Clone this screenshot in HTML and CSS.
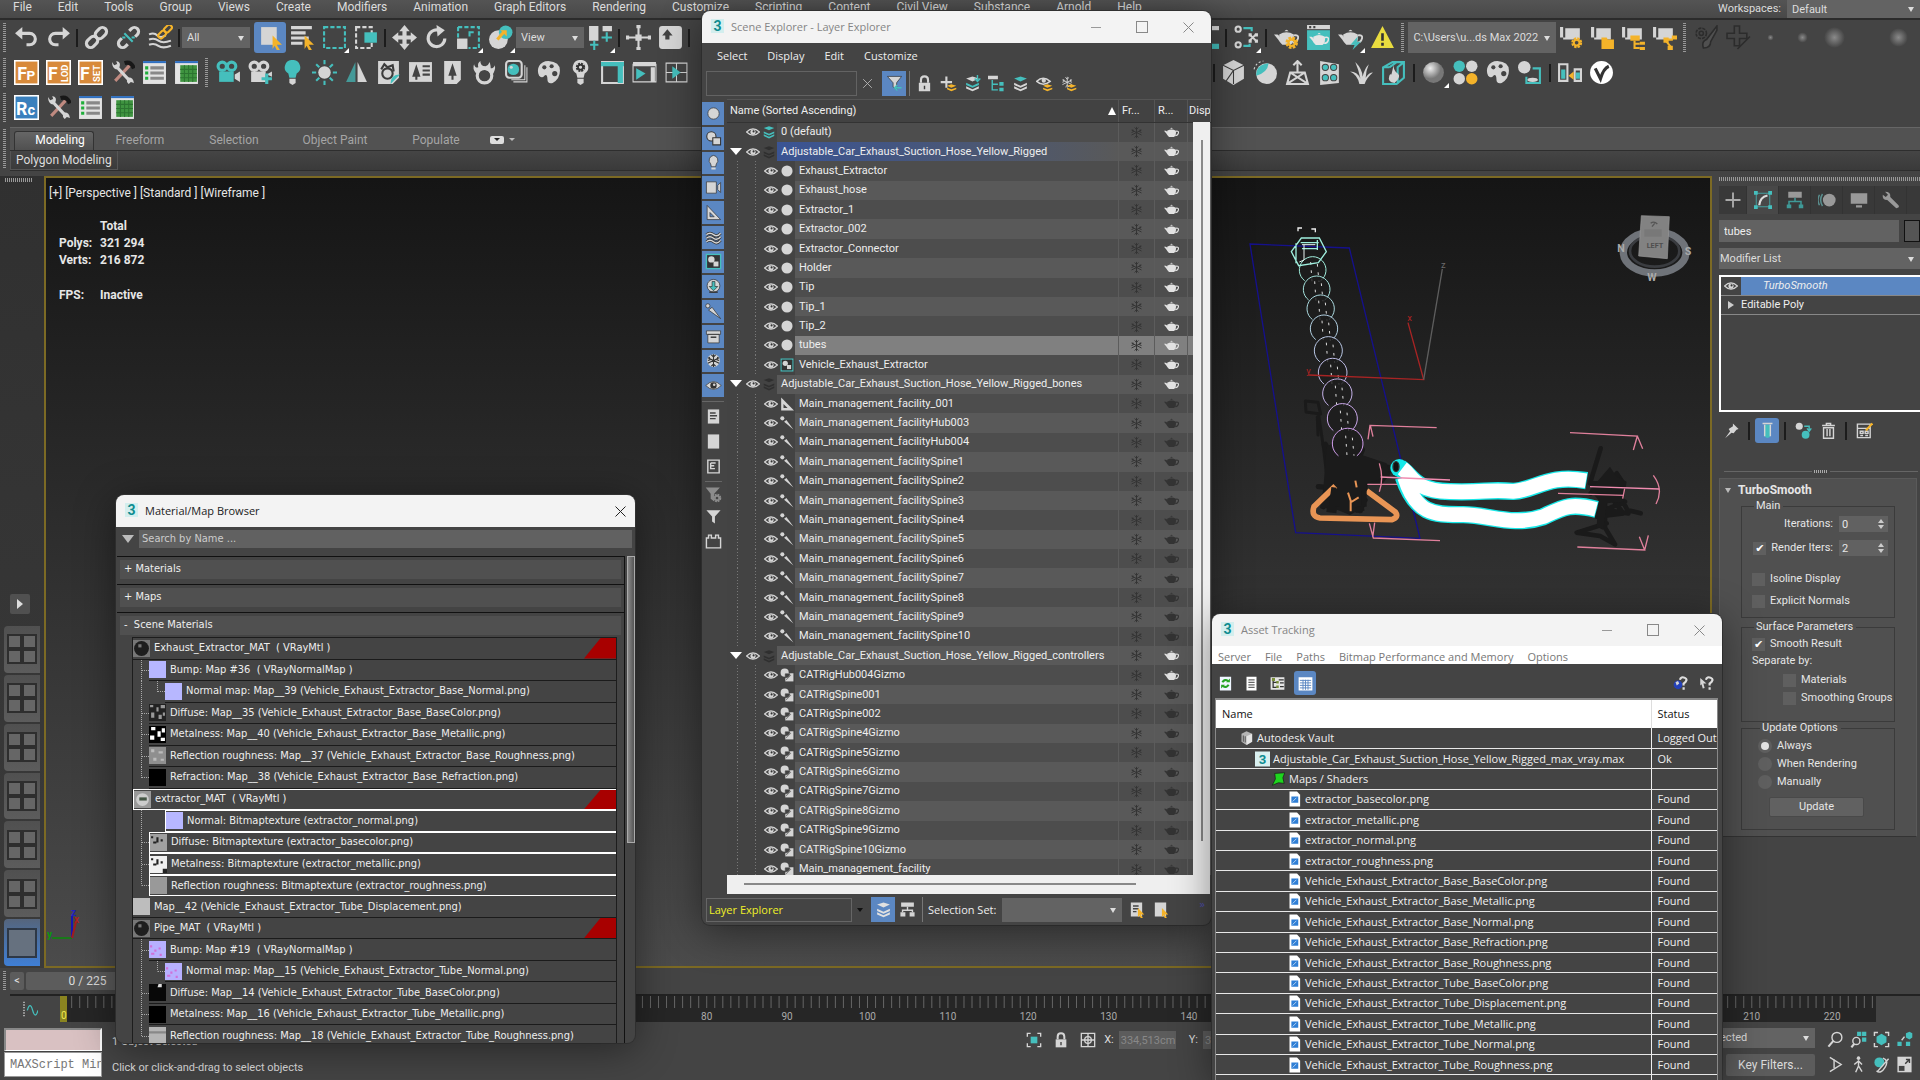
FILE: index.html
```html
<!DOCTYPE html>
<html lang="en">
<head>
<meta charset="utf-8">
<title>3ds Max</title>
<link rel="stylesheet" href="styles.css">
</head>
<body>
<div class="app">
  <header class="menubar">
    <nav class="menus">
      <a href="#">File</a><a href="#">Edit</a><a href="#">Tools</a><a href="#">Group</a><a href="#">Views</a><a href="#">Create</a><a href="#">Modifiers</a><a href="#">Animation</a><a href="#">Graph Editors</a><a href="#">Rendering</a><a href="#">Customize</a><a href="#">Scripting</a><a href="#">Content</a><a href="#">Civil View</a><a href="#">Substance</a><a href="#">Arnold</a><a href="#">Help</a>
    </nav>
    <label class="ws-label" for="workspace">Workspaces:</label>
    <span class="drop ws"><select id="workspace"><option>Default</option></select></span>
  </header>

  <div class="toolbars">
    <div class="toolbar">
      <div class="dock dock-a">
        <i class="grip"></i>
        <div class="tools" data-tools="undo redo | link unlink bind |"></div>
        <span class="drop tb"><select aria-label="Selection filter"><option>All</option></select></span>
        <div class="tools" data-tools="select* byname region^ crossing | move rotate scale^ place^"></div>
        <span class="drop tb view"><select aria-label="Coordinate system"><option>View</option></select></span>
        <div class="tools" data-tools="pivot^ | manip keyboard |"></div>
      </div>
      <div class="dock wide">
        <div class="tools" data-tools="curve | schematic^ | rsetup rframe render^ warning"></div>
        <i class="grip"></i>
        <span class="drop tall"><select aria-label="Project folder"><option>C:\Users\u...ds Max 2022</option></select></span>
        <div class="tools tight" data-tools="docgear docfolder doctree docnode"></div>
        <i class="grip"></i>
        <div class="tools" data-tools="brush plusbrush dot1 dot2 dot3 none dot4"></div>
      </div>
    </div>
    <div class="toolbar">
      <div class="dock dock-b">
        <i class="grip"></i>
        <div class="tools" data-tools="fp flod fset wrench list grid"></div>
        <i class="grip"></i>
        <div class="tools" data-tools="camera cameraplus bulb sun mirror fire billboard tree flame stack palette bulbgear panel play split"></div>
      </div>
      <div class="dock wide">
        <div class="tools" data-tools="| box ballcut tower figures grass gasbox | sphere^ balls palette nodeball | convert vray"></div>
      </div>
    </div>
    <div class="toolbar">
      <i class="grip"></i>
      <div class="tools" data-tools="rc wrench list grid"></div>
    </div>
  </div>

  <div class="ribbon">
    <i class="grip"></i>
    <div class="ribbon-body">
      <nav class="tabs">
        <button class="tab on">Modeling</button><button class="tab">Freeform</button><button class="tab">Selection</button><button class="tab">Object Paint</button><button class="tab">Populate</button>
        <button class="tab-more" aria-label="Ribbon options"><i></i></button>
      </nav>
      <div class="ribbon-panel"><button>Polygon Modeling</button></div>
    </div>
  </div>

  <main class="main">
    <aside class="layouts">
      <i class="grip-h"></i>
      <button class="expand" aria-label="Expand"></button>
      <div class="layout-list" id="layouts"></div>
    </aside>

    <section class="viewport">
      <div class="vp-info">
        <p class="vp-label">[+] [Perspective ] [Standard ] [Wireframe ]</p>
        <dl class="stats">
          <dt></dt><dd>Total</dd>
          <dt>Polys:</dt><dd>321 294</dd>
          <dt>Verts:</dt><dd>216 872</dd>
          <dt class="fps">FPS:</dt><dd class="fps">Inactive</dd>
        </dl>
        <svg class="gizmo" viewBox="0 0 34 34"><path d="M26 30H6" stroke="#0a8a0a" stroke-width="1.5"/><path d="M26 30V8" stroke="#1717b4" stroke-width="2"/><path d="M26 30l4-16" stroke="#a11e1e" stroke-width="2"/><text x="1" y="30" fill="#0a9a0a">y</text><text x="25" y="8" fill="#2222c0">z</text><text x="28" y="15" fill="#b02020">x</text></svg>
      </div>
      <svg class="scene" viewBox="0 0 1500 1140" fill="none" stroke-width="4">
        <path d="M120 132L418 144L630 1015L257 998Z" stroke="#15108c"/>
        <g stroke="#1a1a1a" stroke-width="12" stroke-linecap="round" stroke-linejoin="round">
          <path d="M286 603L324 607L332 642L288 636ZM326 645L340 740L352 840M322 650l2 55" stroke-width="9"/>
          <path d="M345 735l40 100-30 70 100 10M380 770l10 110 60 20M440 760l30 60-20 110M362 780l90 60-80 20M410 700v200M455 750l-40 90M470 795l70 10-30 40-60-10" stroke-width="20"/>
          <path d="M350 850l100-20M340 920l30-60M325 860l60 5M440 930l25-30" stroke-width="16"/>
          <path d="M1172 745L1140 850M1142 880l60-60 20 20-30 60 40-10 20 40 40 10M1140 850l100 0-20-30M1200 870l-40 80 80-10-30-40M1255 940l-70-10 60-25M1190 970l-90 28 70 10 45 25-30-50V880" stroke-width="14"/>
        </g>
        <g fill="#1b1b1b" stroke="none"><path d="M350 740l50-30 40 50 90 30 10 40-70 20-5 70-45 25-50-20-40 0 10-60z"/><path d="M1140 870l60-70 20 30 30 15-10 60-50 5-10 80-20-10 5-80z"/></g>
        <g id="rings" stroke-width="3"></g>
        <path d="M262 84h14M264 84v10M304 87h14M316 87v10" stroke="#eee" stroke-width="4"/>
        <path d="M244 155L274 114H328L349 155L325 188L266 197ZM272 128H326M276 146H324M258 130v60M322 120v30" stroke="#9feedd"/>
        <path d="M282 134V180L268 186M276 134h40" stroke="#e8f5f2" stroke-width="3"/>
        <path d="M296 525L641 539L594 368" stroke="#a82424"/>
        <path d="M641 539L697 207" stroke="#5e5e5e"/>
        <g font-size="28" stroke="none"><text x="289" y="522" fill="#b02222">y</text><text x="592" y="363" fill="#b02222">x</text><text x="693" y="203" fill="#6c6c6c">z</text></g>
        <path d="M376 858L312 920Q302 950 330 954L545 959Q568 952 556 936L470 872" stroke="#e99555" stroke-width="17"/>
        <path d="M414 878l8 24M424 906l22-14M422 900v34M436 842l4 20" stroke="#e99555" stroke-width="6"/>
        <path d="M372 862l-8 60M380 870v50M462 870v50M350 928l30 4M436 930l26-6" stroke="#1a1a1a" stroke-width="16"/>
        <path d="M680 683L480 676L474 718M481 676l8 34M508 790q14 45 0 85M472 853H565M478 970l12 44L690 1022M494 968l-6 44M1080 698L1282 708L1270 750M1282 708l16 38M1044 880L1242 886M1244 866l-6 30M1330 826q32 42 8 86M1102 1041L1304 1050L1288 1010M1304 1050l11-44" stroke="#e0809c"/>
        <g stroke-linejoin="round"><path d="M570 803C610 830 610 872 720 875S830 868 910 874C980 870 1010 822 1130 842" stroke="#16e8e8" stroke-width="52"/><path d="M580 830C620 950 680 943 760 944S910 980 1000 950C1060 922 1080 908 1160 928" stroke="#16e8e8" stroke-width="52"/><circle cx="568" cy="804" r="27" fill="#16e8e8" stroke="none"/><path d="M577 805C612 832 610 872 720 875S830 868 910 874C980 870 1010 822 1128 842" stroke="#fff" stroke-width="44"/><path d="M584 832C620 950 680 943 760 944S910 980 1000 950C1060 922 1080 908 1158 928" stroke="#fff" stroke-width="44"/><ellipse cx="558" cy="800" rx="9" ry="15" fill="#111" stroke="#333"/></g>
        <path d="M512 831L720 840M1140 860L1348 867" stroke="#f08cb0"/>
        <g><ellipse cx="1334" cy="157" rx="94" ry="62" stroke="#6f7379" stroke-width="22"/><ellipse cx="1334" cy="153" rx="74" ry="47" stroke="#3a3c40" stroke-width="8"/><path d="M1294 47L1378 50L1372 176L1286 168Z" fill="#828282" stroke="#999" stroke-width="2"/><path d="M1303 88h52v22h-52z" fill="#787878" stroke="none"/><path d="M1322 70q10-8 20 2M1326 80l8-10" stroke="#555"/><g stroke="none" fill="#4e4e4e" font-weight="700"><text x="1310" y="143" font-size="22">LEFT</text><g fill="#aaa" font-size="32"><text x="1424" y="166">S</text><text x="1312" y="242">W</text><text x="1222" y="156">N</text></g></g></g>
      </svg>
    </section>

    <aside class="command">
      <i class="grip-h"></i>
      <div class="cmd-tabs" id="cmdtabs"></div>
      <div class="cmd-name"><input type="text" aria-label="Object name" value="tubes"><span class="swatch"></span></div>
      <span class="drop modlist"><select aria-label="Modifier List"><option>Modifier List</option></select></span>
      <ul class="modstack">
        <li class="on"><span class="cell" data-icon="eye"></span><em>TurboSmooth</em></li>
        <li><span class="cell"><i class="tri-r"></i></span>Editable Poly</li>
      </ul>
      <div class="stackbar" data-tools="pin | tube* | unique trash | configure"></div>
      <div class="splitter"><i></i></div>
      <section class="rollout">
        <h2><i class="tri-d"></i>TurboSmooth<span class="dots"></span></h2>
        <fieldset class="f-main"><legend>Main</legend>
          <div class="line end"><label for="iter">Iterations:</label><span class="spin"><input id="iter" type="text" value="0"></span></div>
          <div class="line end"><label class="check"><input type="checkbox" checked>Render Iters:</label><span class="spin"><input aria-label="Render Iters" type="text" value="2"></span></div>
          <label class="check iso"><input type="checkbox">Isoline Display</label>
          <label class="check"><input type="checkbox">Explicit Normals</label>
        </fieldset>
        <fieldset class="f-surface"><legend>Surface Parameters</legend>
          <label class="check"><input type="checkbox" checked>Smooth Result</label>
          <p>Separate by:</p>
          <label class="check in"><input type="checkbox">Materials</label>
          <label class="check in"><input type="checkbox">Smoothing Groups</label>
        </fieldset>
        <fieldset class="f-update"><legend>Update Options</legend>
          <label class="check"><input type="radio" name="upd" checked>Always</label>
          <label class="check"><input type="radio" name="upd">When Rendering</label>
          <label class="check"><input type="radio" name="upd">Manually</label>
          <button class="update">Update</button>
        </fieldset>
      </section>
    </aside>
  </main>

  <footer class="bottom">
    <div class="timeslider"><i class="grip"></i><button aria-label="Previous frame">&lt;</button><div class="slider">0 / 225</div></div>
    <div class="trackrow"><span class="curveicon" data-icon="minicurve"></span><svg class="track" id="track"></svg></div>
    <div class="status">
      <div class="maxscript"><div class="pink"></div><input type="text" aria-label="MAXScript Mini Listener" value="MAXScript Mini Listener"></div>
      <div class="messages"><p>1 Object Selected</p><p>Click or click-and-drag to select objects</p></div>
      <div class="coords"><span data-icon="isolate"></span><span data-icon="lock"></span><span data-icon="absolute"></span><label for="cx">X:</label><input id="cx" type="text" value="334,513cm"><label for="cy">Y:</label><input id="cy" type="text" value="3"></div>
      <div class="keys"><span class="drop keydrop"><select aria-label="Key set"><option>Selected</option></select></span><button>Key Filters...</button></div>
      <div class="nav" id="nav"></div>
    </div>
  </footer>

  <section class="window explorer">
    <header class="titlebar dim"><span class="logo">3</span><h1>Scene Explorer - Layer Explorer</h1><button class="w-min" aria-label="Minimize"></button><button class="w-max" aria-label="Maximize"></button><button class="w-close" aria-label="Close" data-icon="x"></button></header>
    <nav class="win-menu"><a href="#">Select</a><a href="#">Display</a><a href="#">Edit</a><a href="#">Customize</a></nav>
    <div class="ex-search"><input type="text" aria-label="Find"><span class="clear" data-icon="x"></span><div class="ex-tools" data-tools="filter* | lock addlayer layerin hierarchy layers eyelayer frost"></div></div>
    <div class="ex-body">
      <div class="ex-side"><div class="ex-on" id="exon"></div><div class="ex-off" id="exoff"></div></div>
      <div class="ex-list">
        <div class="ex-scroll">
          <table class="ex-table"><colgroup><col><col class="c-fr"><col class="c-r"><col class="c-d"></colgroup>
            <thead><tr><th><span class="th-name">Name (Sorted Ascending)<i class="tri-u"></i></span></th><th>Fr...</th><th>R...</th><th class="th-d">Disp</th></tr></thead>
            <tbody id="layers"></tbody>
          </table>
          <div class="vbar"><i></i></div>
        </div>
        <div class="hbar"><i></i></div>
      </div>
    </div>
    <footer class="ex-foot"><input type="text" aria-label="Explorer name" value="Layer Explorer"><i class="tri-s"></i><div class="ex-tools" data-tools="layersw* hier2 |"></div><label for="selset">Selection Set:</label><span class="drop selset"><select id="selset"><option></option></select></span><div class="ex-tools" data-tools="docsel docsel2"></div><span class="more-tools">»</span></footer>
  </section>

  <section class="window materials">
    <header class="titlebar"><span class="logo">3</span><h1>Material/Map Browser</h1><button class="w-close" aria-label="Close" data-icon="x"></button></header>
    <div class="mt-search"><i class="tri-d big"></i><input type="text" aria-label="Search by Name" placeholder="Search by Name ..."></div>
    <div class="mt-body">
      <div class="mt-groups">
        <h2><span>+ Materials</span></h2>
        <h2><span>+ Maps</span></h2>
        <h2 class="open"><span>- &nbsp;Scene Materials</span></h2>
        <ul class="mt-list" id="mats"></ul>
      </div>
      <div class="mt-bar"><i></i></div>
    </div>
  </section>

  <section class="window assets">
    <header class="titlebar dim"><span class="logo">3</span><h1>Asset Tracking</h1><button class="w-min" aria-label="Minimize"></button><button class="w-max" aria-label="Maximize"></button><button class="w-close" aria-label="Close" data-icon="x"></button></header>
    <nav class="win-menu light"><a href="#">Server</a><a href="#">File</a><a href="#">Paths</a><a href="#">Bitmap Performance and Memory</a><a href="#">Options</a></nav>
    <div class="at-tools"><span data-icon="refresh"></span><span data-icon="page"></span><span data-icon="treeview"></span><span class="on" data-icon="table"></span><b></b><span data-icon="help"></span><span data-icon="helpcursor"></span></div>
    <div class="at-frame"><table class="at-table"><colgroup><col><col class="c-s"></colgroup><thead><tr><th>Name</th><th>Status</th></tr></thead><tbody id="assets"></tbody></table></div>
  </section>
</div>
<script src="script.js"></script>
</body>
</html>
```
FILE: styles.css
```css
* { box-sizing: border-box; }
:root { --ui: Roboto, "Liberation Sans", sans-serif; --win: "Open Sans", "Noto Sans", sans-serif; --bg: #444; --fg: #dcdcdc; --blue: #5b87c2; --teal: #45bfbd; --gold: #f4b32a; }
body { margin: 0; background: var(--bg); color: var(--fg); font: 11px/14px var(--ui); overflow: hidden; }
a { color: inherit; text-decoration: none; }
button, input, select { font: inherit; color: inherit; border: 0; margin: 0; padding: 0; background: none; outline: 0; border-radius: 0; }
h1, h2, p, ul, dl, dd, fieldset { margin: 0; padding: 0; border: 0; font: inherit; list-style: none; }
svg { display: block; }
table { border-collapse: collapse; table-layout: fixed; width: 100%; }
th, td { padding: 0; font-weight: 400; text-align: left; }

.w { fill: #d5d5d5; } .t { fill: var(--teal); } .y { fill: var(--gold); } .k { fill: #444; } .d { fill: #8c8c8c; }
.sw { stroke: #d5d5d5; fill: none; stroke-width: 2; } .st { stroke: var(--teal); fill: none; stroke-width: 2; } .sy { stroke: var(--gold); fill: none; stroke-width: 2; } .sk { stroke: #3c3c3c; fill: none; stroke-width: 2; }
.thin { stroke-width: 1; } .fat { stroke-width: 3; }

.app { position: relative; min-height: 100vh; display: flex; flex-direction: column; overflow: hidden; }

.menubar { display: flex; height: 20px; align-items: flex-start; background: linear-gradient(#545454, #484848); border-bottom: 2px solid #2b2b2b; font-size: 12px; line-height: 15px; }
.menus { display: flex; flex: 1; padding-left: 13px; gap: 26px; }
.ws-label { margin-right: 6px; font-size: 11px; line-height: 17px; }
.drop { display: inline-flex; position: relative; background: #636363; color: #ddd; }
.drop select { appearance: none; flex: 1; width: 100%; padding-left: 5px; }
.drop::after { content: ""; position: absolute; right: 6px; top: 50%; margin-top: -2px; border: 3px solid transparent; border-top: 5px solid #ddd; border-bottom: 0; pointer-events: none; }
.ws { width: 133px; height: 18px; font-size: 11px; }

.toolbars { height: 107px; display: flex; flex-direction: column; }
.toolbar { display: flex; height: 35px; align-items: center; }
.dock { display: flex; align-items: center; flex: 0 0 auto; }
.dock-a { width: 62%; } .dock-b { width: 63%; }
.tools { display: flex; align-items: center; }
.grip { flex: 0 0 10px; height: 29px; background: repeating-linear-gradient(#999 0 1px, transparent 1px 2px) 3px 0 / 3px 100% no-repeat; }
.tool { flex: 0 0 32px; width: 32px; height: 31px; display: grid; place-items: center; position: relative; }
.tool svg { width: 25px; height: 25px; }
.tight .tool { flex-basis: 31px; width: 31px; }
.tool.on { background: var(--blue); border-radius: 3px; }
.tool.more::after { content: ""; position: absolute; right: 1px; bottom: 0; border-left: 5px solid transparent; border-bottom: 5px solid #fff; }
.sep { flex: 0 0 6px; height: 18px; background: linear-gradient(#1c1c1c, #1c1c1c) center / 2px 100% no-repeat; }
.wide .sep { flex-basis: 8px; }
.tb { width: 68px; height: 21px; margin-right: 4px; }
.tb.view { margin-right: 0; }
.tall { width: 148px; height: 31px; }

.ribbon { display: flex; height: 44px; }
.ribbon > .grip { height: 40px; margin-top: 2px; }
.ribbon-body { flex: 1; }
.tabs { display: flex; height: 23px; background: #525252; border-top: 1px solid #666; padding: 3px 0 0 4px; }
.tab { height: 17px; font-size: 12px; color: #a5a5a5; width: 92px; }
.tab:nth-child(n+3) { width: 96px; }
.tab:nth-child(4) { width: 106px; }
.tab.on { width: 80px; height: 19px; padding: 0 0 2px 12px; background: linear-gradient(#666, #505050); border: 1px solid #333; border-bottom: 0; border-radius: 3px 3px 0 0; color: #fff; }
.tab-more { display: flex; align-items: center; margin-left: 6px; gap: 5px; height: 17px; }
.tab-more i { width: 14px; height: 8px; background: #ddd; border-radius: 2px; display: grid; place-items: center; }
.tab-more i::after { content: ""; border: 3px solid transparent; border-top-color: #222; border-bottom: 0; }
.tab-more::after { content: ""; border: 3px solid transparent; border-top-color: #bbb; border-bottom: 0; }
.ribbon-panel { height: 21px; border-top: 1px solid #2e2e2e; border-bottom: 1px solid #2e2e2e; background: linear-gradient(#454545, #3a3a3a); }
.ribbon-panel button { display: block; height: 19px; padding: 0 5px 1px; border: 1px solid #555; border-top: 0; font-size: 12px; }

.main { flex: 1; display: flex; min-height: 0; padding-top: 5px; }
.layouts { flex: 0 0 44px; background: linear-gradient(#303030, #3a3a3a); display: flex; flex-direction: column; }
.grip-h { display: block; height: 4px; margin: 2px 0 0 5px; background: repeating-linear-gradient(90deg, #999 0 1px, transparent 1px 2px); }
.layouts .grip-h { margin-right: 12px; }
.expand { width: 20px; height: 20px; margin: auto 0 12px 10px; background: #505050; border-radius: 2px; display: grid; place-items: center; }
.expand::after { content: ""; border: 5px solid transparent; border-left: 6px solid #ddd; border-right: 0; }
.layout-list { height: 340px; margin: 0 4px 2px; display: grid; grid-auto-rows: 1fr; gap: 2px; }
.layout-list button { background: linear-gradient(#505050, #5c5c5c); border-radius: 4px 0 0 4px; display: grid; place-items: center; }
.layout-list button:last-child { background: linear-gradient(#55657c, #3f7fd6); }
.layout-list svg { width: 32px; height: 32px; }
.viewport { flex: 1; display: flex; border: 2px solid #7c6a24; background: linear-gradient(#151515, #4b4b4b); min-width: 0; }
.vp-info { flex: 1; display: flex; flex-direction: column; color: #e6e6e6; }
.vp-label { padding: 8px 0 0 3px; font-size: 12px; }
.stats { display: grid; grid-template-columns: 41px auto; justify-content: start; margin: 18px 0 0 13px; line-height: 17px; font-size: 12px; font-weight: 700; }
.stats .fps { margin-top: 18px; }
.gizmo { width: 34px; height: 34px; margin: auto 0 24px 0; overflow: visible; font: 700 10px var(--ui); }
.scene { flex: 0 0 500px; width: 500px; height: 380px; margin-top: 22px; font-family: var(--ui); }

.command { flex: 0 0 208px; padding-left: 7px; background: #444; overflow: hidden; }
.command .grip-h { margin: 1px 0 0; }
.cmd-tabs { display: flex; height: 28px; margin-top: 5px; background: #393939; }
.cmd-tabs span { flex: 0 0 32px; display: grid; place-items: center; border-right: 1px solid #333; }
.cmd-tabs span:first-child { flex-basis: 28px; }
.cmd-tabs span.on { background: #484848; }
.cmd-tabs svg { width: 18px; height: 18px; }
.cmd-name { display: flex; gap: 5px; margin-top: 6px; }
.cmd-name input { flex: 0 0 180px; width: 180px; height: 22px; background: #626262; padding-left: 5px; color: #eee; }
.swatch { flex: 1; border: 1px solid #111; background: #555; }
.modlist { display: flex; height: 21px; margin-top: 6px; }
.modlist select { padding-left: 1px; }
.modstack { margin: 6px 0 0; height: 137px; border: 2px solid #fff; border-right: 0; }
.modstack li { display: flex; height: 19px; align-items: center; border-bottom: 1px solid #888; color: #eee; }
.modstack li.on { background: var(--blue); }
.modstack .cell { flex: 0 0 20px; height: 18px; display: grid; place-items: center; background: #444; }
.modstack svg { width: 14px; height: 14px; }
.modstack em { padding-left: 22px; }
.tri-r { border: 4px solid transparent; border-left: 6px solid #ccc; border-right: 0; }
.tri-d { border: 3px solid transparent; border-top: 5px solid #bbb; border-bottom: 0; }
.tri-d.big { border-width: 6px; border-top-width: 8px; border-bottom: 0; }
.tri-u { border: 4px solid transparent; border-bottom: 8px solid #fff; border-top: 0; }
.tri-s { border: 3px solid transparent; border-top: 4px solid #111; border-bottom: 0; }
.stackbar { display: flex; align-items: center; margin-top: 6px; gap: 1px; }
.stackbar .tool { flex-basis: 24px; width: 24px; height: 25px; }
.stackbar .tool svg { width: 17px; height: 17px; }
.stackbar .sep { flex-basis: 10px; }
.splitter { margin: 24px 2px 0 5px; height: 8px; background: linear-gradient(#666, #666) 0 50% / 100% 1px no-repeat; display: grid; place-items: center; }
.splitter i { width: 18px; height: 5px; background: repeating-linear-gradient(90deg, #aaa 0 1px, #444 1px 2px); border: 2px solid #444; border-width: 1px 2px; }
.rollout { margin-top: 3px; width: 198px; height: 359px; background: #505050; border: 1px solid #5a5a5a; border-bottom-color: #333; padding-left: 21px; color: #e6e6e6; }
.rollout h2 { display: flex; align-items: center; height: 22px; margin-left: -16px; gap: 7px; font-weight: 700; font-size: 12px; }
.rollout .dots { width: 6px; height: 6px; margin: 0 6px 0 auto; background: radial-gradient(#999 0 40%, transparent 50%) 0 0 / 2px 2px; }
.rollout fieldset { width: 154px; display: flex; flex-direction: column; border: 1px solid #3b3b3b; }
legend { margin-left: 2px; padding: 0 3px 0 2px; height: 12px; line-height: 12px; }
.f-main { height: 118px; margin-top: -1px; }
.rollout .f-main { padding: 4px 6px 0 10px; }
.rollout .f-surface { height: 101px; padding: 2px 0 0 10px; margin-top: 3px; }
.rollout .f-update { height: 108px; padding: 3px 6px 0 16px; }
.line { display: flex; justify-content: flex-end; align-items: center; gap: 6px; height: 16px; margin-bottom: 8px; }
.spin { position: relative; width: 49px; height: 16px; background: #616161; }
.spin input { display: block; width: 40px; height: 16px; padding-left: 3px; }
.spin::before, .spin::after { content: ""; position: absolute; right: 4px; border: 3px solid transparent; }
.spin::before { top: 3px; border-bottom: 4px solid #ccc; border-top: 0; }
.spin::after { bottom: 3px; border-top: 4px solid #ccc; border-bottom: 0; }
.check { display: flex; align-items: center; gap: 5px; height: 16px; flex: 0 0 auto; white-space: nowrap; }
.f-main > .check { margin-bottom: 6px; }
.f-main > .iso { margin-top: 7px; }
.f-surface .check { height: 18px; }
.f-surface p { height: 18px; line-height: 16px; }
.f-update .check { height: 18px; }
.check.in { margin-left: 31px; }
.check input { appearance: none; width: 13px; height: 13px; background: #5f5f5f; display: grid; place-items: center; }
.check input[type=radio] { width: 14px; height: 14px; border-radius: 50%; }
.check input[type=checkbox]:checked::after { content: "✔"; font: 11px/11px "DejaVu Sans", sans-serif; color: #fff; }
.check input[type=radio]:checked::after { content: ""; width: 8px; height: 8px; border-radius: 50%; background: #e4e4e4; }
.update { width: 95px; height: 20px; margin: 6px 0 0 11px; background: #616161; border: 1px solid #494949; border-radius: 2px; }

.bottom { flex: 0 0 112px; background: #444; }
.timeslider { display: flex; height: 26px; align-items: center; gap: 2px; }
.timeslider .grip { flex-basis: 8px; height: 20px; }
.timeslider button { width: 14px; height: 18px; background: #5c5c5c; border-radius: 2px; }
.slider { width: 123px; height: 18px; line-height: 18px; border-radius: 2px; background: #5c5c5c; text-align: center; font-size: 12px; }
.trackrow { display: flex; height: 28px; border-top: 2px solid #222; margin-left: 10px; padding-right: 44px; }
.curveicon { flex: 0 0 50px; display: grid; place-items: center; padding-right: 10px; }
.curveicon svg { width: 16px; height: 16px; }
.track { flex: 1; height: 26px; background: #262626; min-width: 0; font: 10px var(--ui); }
.status { display: flex; height: 58px; padding-top: 6px; }
.maxscript { width: 98px; margin-left: 4px; height: 50px; }
.pink { height: 23px; background: #d9c1c2; border: 2px solid #888; border-right-color: #fff; border-bottom: 1px solid #fff; }
.maxscript input { display: block; width: 98px; height: 25px; margin-top: 1px; background: #fff; border: 1px solid #999; color: #777; font: 12px "Liberation Mono", monospace; padding-left: 5px; }
.messages { margin-left: 10px; flex: 1; padding-top: 7px; }
.messages p + p { margin-top: 12px; }
.coords { display: flex; gap: 5px; height: 24px; align-items: center; margin-right: 473px; }
.coords span { width: 22px; display: grid; place-items: center; }
.coords svg { width: 16px; height: 16px; }
.coords input { width: 57px; height: 18px; background: #5c5c5c; color: #888; padding-left: 2px; margin-right: 8px; }
.coords input + label + input { width: 24px; margin: 0; }
.keys { display: flex; flex-direction: column; gap: 6px; align-items: flex-end; }
.keydrop { width: 115px; height: 20px; }
.keys button { width: 89px; height: 22px; background: #5c5c5c; border-radius: 2px; font-size: 12px; }
.nav { display: grid; grid-template-columns: repeat(4, 23px); grid-auto-rows: 25px; margin: -1px 4px 0 9px; place-items: center; }
.nav svg { width: 17px; height: 17px; }

.window { position: absolute; display: flex; flex-direction: column; width: 510px; background: #444; border-radius: 8px; overflow: hidden; box-shadow: 0 6px 40px rgba(0, 0, 0, .45), 0 0 0 1px #3a3a3a; font-family: var(--win); }
.titlebar { display: flex; align-items: center; flex: 0 0 32px; background: #f3f3f3; color: #222; font-size: 11px; }
.titlebar h1 { flex: 1; }
.titlebar.dim { color: #858585; }
.logo { width: 13px; height: 14px; margin: 0 7px 3px 9px; background: #d3eeee; color: #0e8c90; font: 700 14px/14px var(--ui); text-align: center; }
.titlebar button { width: 46px; height: 32px; display: grid; place-items: center; }
.w-min::after { content: ""; width: 10px; height: 1px; background: #999; }
.w-max::after { content: ""; width: 10px; height: 10px; border: 1px solid #888; }
.titlebar svg { width: 15px; height: 15px; color: #888; }
.win-menu { display: flex; color: #eee; gap: 20px; padding: 6px 0 0 15px; height: 28px; }
.win-menu.light { background: #fff; color: #777; height: 22px; padding: 4px 0 0 6px; gap: 14px; }

.explorer { left: 702px; top: 11px; width: 509px; height: 914px; }
.ex-search { display: flex; align-items: center; height: 25px; padding-left: 4px; }
.ex-search input { width: 151px; height: 25px; border: 1px solid #636363; }
.clear { width: 25px; display: grid; place-items: center; color: #bbb; padding-right: 4px; }
.clear svg { width: 13px; height: 13px; }
.ex-tools { display: flex; align-items: center; }
.ex-tools .tool { flex: 0 0 24px; width: 24px; height: 25px; border-radius: 0; }
.ex-tools .tool svg { width: 17px; height: 17px; }
.ex-tools .sep { background-image: linear-gradient(#777, #777); background-size: 1px 100%; height: 25px; }
.ex-body { display: flex; flex: 1; margin-top: 3px; font-family: var(--ui); min-height: 0; }
.ex-side { flex: 0 0 24px; }
.ex-on { height: 295px; margin-top: 3px; display: grid; grid-auto-rows: 1fr; gap: 2px; }
.ex-on span { background: var(--blue); width: 22px; display: grid; place-items: center; }
.ex-side svg { width: 17px; height: 17px; }
.ex-off { width: 22px; border-top: 1px solid #666; margin-top: 4px; padding-top: 2px; display: grid; grid-auto-rows: 25px; place-items: center; }
.ex-off span:nth-child(4) { border-top: 1px solid #666; padding-top: 4px; }
.ex-list { flex: 1; margin-left: 1px; display: flex; flex-direction: column; min-width: 0; }
.ex-scroll { position: relative; height: 777px; overflow: hidden; }
.ex-table { height: 780px; }
.ex-table th { height: 23px; border: 1px solid #555; border-bottom-color: #333; border-left: 0; padding-left: 3px; color: #eee; white-space: nowrap; overflow: hidden; background: #424242; }
.ex-table .th-d { padding-left: 1px; }
.th-name { display: flex; justify-content: space-between; padding-right: 2px; align-items: center; }
.c-fr { width: 36px; } .c-r { width: 33px; } .c-d { width: 23px; }
.ex-table td { height: 19px; border-right: 1px solid #5c5c5c; background: #4d4d4d; color: #eee; }
.ex-table td:first-child { background: #434343; }
.ex-table tr:nth-child(even) td:not(:first-child), .ex-table tr:nth-child(even) .nm { background: #595959; }
.row { display: flex; height: 100%; align-items: center; }
.row .lead { flex: 0 0 18px; display: grid; place-items: center; align-self: stretch; }
.row.child .lead { flex-basis: 36px; background: repeating-linear-gradient(#777 0 1px, transparent 1px 3px) 10px 0 / 1px 100% no-repeat, repeating-linear-gradient(#777 0 1px, transparent 1px 3px) 28px 0 / 1px 100% no-repeat; }
.row .ic { flex: 0 0 16px; display: grid; place-items: center; }
.row svg { width: 14px; height: 14px; }
.row .lead svg { width: 12px; height: 12px; }
.nm { flex: 1; height: 100%; padding-left: 4px; background: #4d4d4d; display: flex; align-items: center; white-space: nowrap; }
.ex-table tr.current .nm { background: linear-gradient(90deg, #3a5494, #50586a 75%, #595959); }
.ex-table tr.selected td:not(:first-child), .ex-table tr.selected .nm { background: #808080; }
.ex-table td > svg { margin: 0 auto; width: 15px; height: 15px; }
.vbar { position: absolute; right: 1px; top: 23px; bottom: 0; width: 17px; background: #efefef; }
.vbar i { position: absolute; left: 8px; top: 18px; bottom: 34px; width: 2px; background: #888; }
.hbar { height: 19px; background: #efefef; margin-right: 1px; padding: 8px 0 0 17px; }
.hbar i { display: block; width: 392px; height: 2px; background: #888; }
.ex-foot { display: flex; align-items: center; height: 31px; padding-left: 4px; }
.ex-foot > input { width: 146px; height: 24px; border: 1px solid #666; color: #f0f028; padding-left: 2px; }
.ex-foot .tri-s { margin: 0 8px 0 5px; }
.ex-foot label { margin: 0 6px 0 3px; color: #eee; }
.selset { width: 120px; height: 24px; margin-right: 2px; }
.more-tools { margin: 0 6px 12px auto; color: #4d4da8; }

.materials { left: 116px; top: 495px; width: 519px; height: 548px; font-family: "DejaVu Sans Condensed", var(--ui); }
.materials .titlebar { font-family: var(--win); }
.materials .titlebar svg { color: #222; }
.materials .titlebar button { width: 30px; }
.mt-search { display: flex; align-items: center; gap: 5px; padding: 2px 3px 0 6px; height: 21px; }
.mt-search input { flex: 1; height: 18px; background: #616161; padding-left: 3px; }
.mt-search input::placeholder { color: #ccc; opacity: 1; }
.mt-body { flex: 1; display: flex; margin-top: 8px; min-height: 0; }
.mt-groups { flex: 1; margin-left: 1px; border-right: 1px solid #111; overflow: hidden; }
.mt-groups h2 { height: 28px; border-top: 1px solid #111; padding: 3px 3px 0; color: #eee; }
.mt-groups h2 span { display: block; height: 19px; line-height: 18px; padding-left: 4px; background: #505050; }
.mt-groups h2.open { height: 25px; }
.mt-bar { flex: 0 0 10px; padding-left: 2px; }
.mt-bar i { display: block; height: 287px; background: linear-gradient(90deg, #888, #555); border: 1px solid #aaa; }
.mt-list { margin: 0 7px 0 15px; height: 411px; display: grid; grid-auto-rows: 1fr; border: 1px solid #1d1d1d; }
.mt-list li { display: flex; min-height: 0; }
.mt-list .pad { flex: 0 0 16px; background: repeating-linear-gradient(#aaa 0 1px, transparent 1px 2px) 8px 0 / 1px 100% no-repeat, repeating-linear-gradient(90deg, #aaa 0 1px, transparent 1px 2px) 9px 50% / 8px 1px no-repeat; }
.mt-list .end { background-size: 1px 50%, 8px 1px; }
.mt-list .gap { background-size: 1px 100%, 0 0; }
.mt-list .blank { background: none; }
.mt-list .m { flex: 1; display: flex; align-items: center; gap: 4px; border-bottom: 1px solid #1b1b1b; color: #eee; white-space: nowrap; }
.mt-list .hot .m { border: 1px solid #fff; border-right: 0; }
.mt-list svg { width: 17px; height: 17px; }
.flag { width: 32px; height: 100%; margin-left: auto; background: #a80000; clip-path: polygon(52% 0, 100% 0, 100% 100%, 0 100%); }

.assets { left: 1212px; top: 614px; bottom: 0; border-radius: 8px 8px 0 0; }
.at-tools { display: flex; align-items: center; height: 34px; padding: 4px 3px 0 0; flex: 0 0 auto; }
.at-tools span { width: 26px; height: 24px; display: grid; place-items: center; }
.at-tools .on { background: var(--blue); border-radius: 3px; width: 22px; margin-left: 4px; }
.at-tools svg { width: 15px; height: 15px; }
.at-tools b { flex: 1; }
.at-frame { margin: 0 4px 0 3px; border: 1px solid #888; border-top-width: 2px; border-bottom: 0; }
.at-table { height: 396px; color: #f0f0f0; }
.c-s { width: 66px; }
.at-table th { height: 28px; background: #fff; color: #111; padding-left: 6px; border-right: 1px solid #ddd; }
.at-table td { height: 20px; border-bottom: 1px solid #e8e8e8; border-right: 1px solid #eee; white-space: nowrap; overflow: hidden; padding-left: 6px; }
.at-table th:last-child, .at-table td:last-child { border-right: 0; }
.at-table td:first-child { padding-left: 0; }
.at-row { display: flex; align-items: center; gap: 3px; }
.at-row svg { width: 15px; height: 16px; }
.l0 { padding-left: 23px; } .l1 { padding-left: 39px; } .l2 { padding-left: 55px; } .l3 { padding-left: 71px; }
```
FILE: script.js
```js
const teapot = (c, x = 0, y = 0, s = 1) => `<g transform="translate(${x} ${y}) scale(${s})" fill="${c}"><path d="M5 9Q12 5 19 9Q20 16 16 19H8Q5 16 4 14L0 9h3q2 0 2 3z"/><path d="M19 10q5-1 4 3t-5 4" fill="none" stroke="${c}" stroke-width="1.8"/><path d="M10 6q2-3 4 0z"/></g>`;
const gear = (x, y, r, c) => `<circle cx="${x}" cy="${y}" r="${r}" fill="none" stroke="${c}" stroke-width="${r}" stroke-dasharray="${r * 0.55} ${r * 0.235}"/><circle cx="${x}" cy="${y}" r="${r * 0.8}" fill="none" stroke="${c}" stroke-width="${r * 0.5}"/>`;
const cursor = '<path class="y" d="M14 10l9 9h-5l3 5-3 0-2-4-2 3z"/>';
const layer = (c, y) => `<path fill="${c}" d="M12 ${y}l9 3-9 4-9-4z"/>`;
const layers = (a, b, c) => layer(a, 2) + `<path fill="${b}" d="M3 11l9 4 9-4v3l-9 4-9-4z"/><path fill="${c}" d="M3 16l9 4 9-4v3l-9 4-9-4z"/>`;
const badge = (bg, inner) => `<path fill="#fff" d="M0 0h24v24H0z"/><path fill="${bg}" d="M1.500 1.500h21v21h-21z"/><g fill="#fff" font-family="Roboto" font-weight="700">${inner}</g>`;
const doc = '<path class="w" d="M1 2h3v12h16V3H6v9H1z"/>';
const dot = (r) => `<defs><radialGradient id="dot${r}"><stop offset="0" stop-color="#8a8a8a"/><stop offset="1" stop-color="#444"/></radialGradient></defs><circle cx="12" cy="12" r="${r}" fill="url(#dot${r})"/>`;
const flake = (c) => `<path d="M12 3v18M4 8l16 8M20 8L4 16M9 4l3 3 3-3M9 20l3-3 3 3M4 12l3-1-1-4M20 12l-3-1 1-4" stroke="${c}" stroke-width="1.500" fill="none"/>`;
const miniLayers = '<path class="y" d="M10 15l6-2 7 2-7 3zM10 18l6 2 7-2v2l-7 3-6-3z"/>';
const page = '<path class="w" d="M4 2h16v20H4z"/>';

const icons = {
  undo: '<path class="sw fat" d="M5 8h10a5 5 0 010 11h-3"/><path class="w" d="M8 2v12L1 8z"/>',
  redo: '<path class="sw fat" d="M19 8H9a5 5 0 000 11h3"/><path class="w" d="M16 2v12l7-6z"/>',
  link: '<g class="sw fat" transform="rotate(-45 12 12)"><rect x="0" y="8" width="12" height="8" rx="4"/><rect x="12" y="8" width="12" height="8" rx="4"/></g>',
  unlink: '<g transform="rotate(-45 12 12)"><path class="sw fat" d="M7 8H4a4 4 0 000 8h3M17 8h3a4 4 0 010 8h-3"/></g><path class="st" d="M8 8l8 8M6 12l3 0M15 12l3 0"/>',
  bind: '<path class="sw" d="M1 9q5-2 8 1t8 0M1 14q5-2 9 1t12 0M1 19q5-2 9 1t12 0"/><g class="sy" transform="rotate(-45 16 6)"><rect x="8" y="4" width="8" height="5" rx="2"/><rect x="16" y="4" width="8" height="5" rx="2"/></g>',
  select: '<path class="w" d="M3 2h15v17H3z"/>' + cursor,
  byname: '<path class="w" d="M1 1h20v3H1zM1 6h14v3H1zM1 11h17v3H1zM1 16h11v3H1z"/>' + cursor,
  region: '<path class="st" stroke-dasharray="4 2" d="M2 2h20v20H2z"/>',
  crossing: '<path class="sw" stroke-dasharray="4 2" d="M2 2h15v20H2z"/><path class="t" d="M10 7h12v10H10z"/>',
  move: '<path class="w" d="M12 0l5 6h-3v4h4V7l6 5-6 5v-3h-4v4h3l-5 6-5-6h3v-4H6v3l-6-5 6-5v3h4V6H7z"/>',
  rotate: '<path class="sw fat" d="M14 5a8 8 0 106 8"/><path class="w" d="M12 0l8 5-7 6z"/>',
  scale: '<path class="st" stroke-dasharray="4 2" d="M2 2h20v20H12M2 12V2"/><path class="w" d="M1 13h10v10H1z"/><path class="st" d="M13 11V7h4"/>',
  place: '<circle class="w" cx="10" cy="14" r="9"/><circle class="t" cx="17" cy="7" r="6.500"/><path class="sy fat" d="M9 14l6-7"/><path class="y" d="M12 5h6v6z"/>',
  pivot: '<path class="w" d="M1 1h9v14H1zM14 1h9v5h-9z"/><path class="st" d="M6 15v9M2 19h8M18 7v9M13 12h10"/>',
  manip: '<path class="sw" d="M12 1v22M1 12h22"/><path class="w" d="M9 9h6v6H9zM10 0h4v3h-4zM10 21h4v3h-4zM0 10h3v4H0zM21 10h3v4h-3z"/>',
  keyboard: '<rect class="w" x="1" y="1" width="22" height="22" rx="3"/><path class="k" d="M9 4l5 6h-3v4H7v-4H4z"/>',
  curve: '<path class="w" d="M10 1h14v4H10z"/><path class="t" d="M16 18h8v5h-8z"/>',
  schematic: '<g class="sw"><circle cx="4" cy="4" r="2.500"/><circle cx="4" cy="19" r="2.500"/><path d="M15 9l6 6M21 9l-6 6"/></g><path class="w" d="M14 8h3v3h-3zM20 8h3v3h-3zM14 14h3v3h-3zM20 14h3v3h-3z"/><path class="st" d="M9 3h8v3M9 20h6v-2"/>',
  rsetup: teapot('#d5d5d5') + gear(17, 17, 4, '#f4b32a'),
  rframe: '<path class="w" d="M1 0h22v4H1z"/><path class="k" d="M3 1h2v2H3zM7 1h2v2H7z"/><path class="t" d="M1 5h22v19H1z"/>' + teapot('#e6e6e6', 3, 4, 0.8),
  render: teapot('#d5d5d5') + '<path class="t" d="M19 11l-7 8h4l-2 5 8-8h-4z"/>',
  warning: '<path d="M12 1l11 21H1z" fill="#e9dc3f"/><path d="M12 8v7M12 17v3" stroke="#333" stroke-width="2.500"/>',
  docgear: doc + gear(17, 17, 3.5, '#f4b32a'), docfolder: doc + '<path class="y" d="M11 12h5l1 2h6v9H11z"/>',
  doctree: doc + '<path class="y" d="M9 10h9v5H9zM18 16h5v3h-5zM18 21h5v3h-5z"/><path class="sy" d="M13 15v7h5M13 18h5"/>', docnode: doc + '<path class="y" d="M11 12h5v5h-5zM19 10h5v4h-5zM15 20h5v4h-5z"/><path class="sy" d="M15 14h5M14 16l4 5"/>',
  brush: '<g stroke="#2c2c2c" stroke-width="1.500"><circle cx="7" cy="8" r="5" stroke-dasharray="3 1"/><circle cx="7" cy="8" r="2"/><path d="M22 1l-10 13q-5 2-3 8 7 0 7-6l6-11z" fill="#505050"/></g>',
  plusbrush: '<path stroke="#2c2c2c" stroke-width="1.500" d="M8 1h5v7h7v5h-7v7H8v-7H1V8h7zM23 11l-7 7-5 5"/>',
  dot1: dot(3), dot2: dot(5), dot3: dot(10), dot4: dot(9), none: '',
  fp: badge('#d88a3a', '<text x="3" y="19" font-size="17">F</text><text x="12" y="19" font-size="13">P</text>'),
  flod: badge('#d88a3a', '<text x="2" y="19" font-size="17">F</text><text font-size="9" transform="translate(21 21) rotate(-90)">LOD</text>'),
  fset: badge('#d88a3a', '<text x="2" y="19" font-size="17">F</text><text font-size="9" transform="translate(21 21) rotate(-90)">SET</text>'),
  rc: badge('#3a80bd', '<text x="2" y="19" font-size="17">R</text><text x="13" y="19" font-size="14">c</text>'),
  wrench: '<path d="M20 4L5 20" stroke="#c08a80" stroke-width="3"/><path d="M14 3q6-2 9 5" stroke="#181818" stroke-width="4" fill="none"/><path class="sw fat" d="M5 5l14 15"/><path class="w" d="M2 2l2 3 3-1-1-3q5 1 3 6l-3 2Q2 8 2 2zM17 17q5-1 6 5l-3-1-2 2q-3-2-1-6z"/>',
  list: '<path fill="#e3e3e3" d="M1 1h22v22H1z"/><path fill="#2f6fc0" d="M1 1h22v2H1z"/><path d="M3 6h3v3H3zM3 11h3v3H3zM3 16h3v3H3z" fill="#1fae3a"/><path d="M8 7.500h13M8 12.500h13M8 17.500h13" stroke="#888" stroke-width="3"/>',
  grid: '<path fill="#e3e3e3" d="M1 1h22v22H1z"/><path fill="#2f6fc0" d="M1 1h22v2H1z"/><path fill="#3f9440" d="M6 5h16v16H6z"/><path d="M6 9h16M6 13h16M6 17h16M10 5v16M14 5v16M18 5v16" stroke="#2c7430"/>',
  camera: '<circle class="st fat" cx="6" cy="6" r="4"/><circle class="st fat" cx="15" cy="6" r="4"/><path class="t" d="M3 11h14v10H3z"/><path class="w" d="M18 14l5-3v10l-5-3z"/>',
  cameraplus: '<circle class="sw fat" cx="6" cy="6" r="4"/><circle class="sw fat" cx="15" cy="6" r="4"/><path class="w" d="M3 11h14v10H3zM18 14l5-3v5z"/><path class="st fat" d="M18 13v10M13 18h10"/>',
  bulb: '<path class="t" d="M12 0a7 7 0 00-4 13l1 4h6l1-4a7 7 0 00-4-13z"/><path class="w" d="M9 18h6v4l-3 2-3-2z"/>',
  sun: '<circle class="w" cx="12" cy="12" r="6"/><path class="st" d="M12 0v4M12 20v4M0 12h4M20 12h4M4 4l3 3M17 17l3 3M20 4l-3 3M7 17l-3 3"/>',
  mirror: '<path class="t" opacity=".7" d="M11 2v19H2z"/><path class="w" d="M13 2v19h9z"/>',
  fire: '<path class="w" d="M2 1h20v16l-6 6H2z"/><circle class="sk" cx="11" cy="13" r="5"/><path class="sk" d="M5 9l3-5 3 3 5-2 1 6"/><path class="t" d="M14 23q0-9 9-9z"/>',
  billboard: '<path class="w" d="M1 2h22v19H1z"/><path class="k" d="M8 4l4 12H9v3H7v-3H4zM14 5h7v2h-7zM14 9h7v2h-7zM14 13h7v2h-7z"/>',
  tree: '<path class="w" d="M4 1h16v18l-4 4H4z"/><path class="k" d="M12 3l4 12h-3v4h-2v-4H8z"/>',
  flame: '<circle class="sw fat" cx="12" cy="15" r="7"/><path class="w" d="M4 13Q0 8 2 4q1 4 4 3Q5 3 8 1q0 5 5 5 3-1 4-4 1 4 1 6 3 0 4-3 1 5-3 10-3-6-8-6-4 0-7 4z"/>',
  stack: '<path class="sw thin" d="M9 21h13V7M7 19h13V5"/><rect class="sw" x="2" y="1" width="15" height="16" rx="3"/><circle class="t" cx="9" cy="9" r="5.500"/><circle class="w" cx="7" cy="7" r="1.500"/>',
  palette: '<path class="w" d="M12 1C3 1 0 9 3 15q3 3 5 0 3-2 3 4 0 4 5 3 7-4 7-12T12 1z"/><g class="k"><circle cx="8" cy="7" r="2"/><circle cx="15" cy="6" r="2"/><circle cx="18" cy="13" r="2.500"/></g>',
  bulbgear: `<path class="w" d="M12 0a7 7 0 00-4 13l1 4h6l1-4a7 7 0 00-4-13z"/>${gear(12, 7, 3, '#333')}<path class="w" d="M9 18h6v4l-3 2-3-2z"/>`,
  panel: '<path class="sw" d="M2 2h20v20H2z"/><path class="t" d="M1 2h22v4H1zM17 6h5v16h-5z"/>',
  play: '<path class="sw thin" d="M1 4h22v17H1z"/><path class="w" d="M1 2h22v4H1zM18 7h4v14h-4z"/><path class="t" d="M4 8l9 5-9 6z"/>',
  split: '<path class="sw thin" d="M2 3h20v18H2zM12 3v18M2 12h20"/><path class="t" d="M8 6l8 6-8 6z"/>',
  box: '<path class="w" d="M12 0l10 5v13l-10 6-10-6V5z"/><path class="sk thin" d="M2 5l10 5 10-5M12 10v13M12 10L5 20"/>',
  ballcut: '<circle class="w" cx="13" cy="13" r="10"/><path class="t" d="M3 15Q3 4 15 3q-1 9-12 12z"/><path class="sw thin" stroke-dasharray="2 2" d="M1 9q2-7 9-8"/>',
  tower: '<path class="sw" d="M5 12h14l3 11H2zM5 12l17 11M19 12L2 23M12 1v11M8 5l4-4 4 4"/>',
  figures: '<path class="w" d="M3 1l18 3v18L3 24z"/><g class="t" stroke="#444"><circle cx="8" cy="7" r="3"/><circle cx="16" cy="7" r="3"/><circle cx="8" cy="17" r="3"/><circle cx="16" cy="17" r="3"/></g>',
  grass: '<path class="w" d="M10 23Q8 14 1 11q7 0 10 7Q9 9 6 2q7 7 7 14 2-8 6-12-3 7-3 13 3-5 7-5-6 5-8 11z"/>',
  gasbox: '<path class="st" d="M2 7l9-5h11v15l-7 6H2zM2 7h6M8 7l7-5M22 2l-6 5v16"/><path class="w" d="M12 5q0 5 4 8t-3 9q-7-1-5-7 1-2 2-1 1-4 2-9z"/>',
  sphere: '<defs><radialGradient id="sp" cx=".35" cy=".3"><stop offset="0" stop-color="#eee"/><stop offset="1" stop-color="#777"/></radialGradient></defs><circle cx="12" cy="12" r="10" fill="url(#sp)"/>',
  balls: '<circle class="t" cx="6" cy="6" r="5.500"/><circle class="w" cx="18" cy="6" r="5.500"/><circle class="w" cx="6" cy="18" r="5.500"/><circle class="y" cx="18" cy="18" r="5.500"/>',
  nodeball: '<circle class="w" cx="7" cy="7" r="6"/><path class="st" d="M15 8h7v14H9v-6"/><ellipse class="w" cx="15" cy="19" rx="5" ry="2"/>',
  convert: '<path class="sw" d="M2 4h8v16H2zM17 9h6v11h-6z"/><path class="t" d="M4 9h4v9H4zM18 12h4v6h-4z"/><path class="y" d="M16 11v8l-5-4z"/>',
  vray: '<circle cx="12" cy="12" r="11" fill="#fff"/><path d="M6 8l5 10Q14 8 19 6" stroke="#333" stroke-width="3" fill="none"/>',
  eye: '<path d="M1 12Q12 1 23 12Q12 23 1 12z" fill="none" stroke="#d5d5d5" stroke-width="2"/><circle cx="12" cy="12" r="4.500" class="w"/><circle cx="13" cy="11" r="1.800" fill="#333"/>',
  eyek: '<path d="M1 12Q12 1 23 12Q12 23 1 12z" fill="#d5d5d5" stroke="#333"/><circle cx="12" cy="12" r="4.500" fill="#333"/><circle cx="13" cy="11" r="1.800" class="w"/>',
  ball: '<circle class="w" cx="12" cy="12" r="9.500"/>',
  ballk: '<circle class="w" cx="12" cy="12" r="8" stroke="#333"/>',
  shapes: '<circle class="w" cx="8" cy="8" r="7"/><path class="w" d="M9 9h14v14H9z"/><path d="M9 10h8q-1 7-8 7zM10 21l9-9" fill="#444" stroke="#444"/>',
  shapesk: '<circle cx="9" cy="9" r="6.500" fill="#d5d5d5" stroke="#333" stroke-width="1.500"/><path d="M11 11h11v10H11z" fill="#d5d5d5" stroke="#333" stroke-width="1.500"/>',
  lightk: '<path d="M12 2a7 7 0 00-4 12l1 4h6l1-4a7 7 0 00-4-12z" fill="#d5d5d5" stroke="#333"/><path class="w" d="M9 19h6v3H9z"/>',
  camk: '<path d="M2 4h14v16H2zM18 9l4-4v14l-4-4z" fill="#d5d5d5" stroke="#333"/>',
  rulerk: '<path d="M3 2v20h19zM7 12l6 6H7z" fill="#d5d5d5" fill-rule="evenodd" stroke="#333"/>',
  ruler: '<path class="w" fill-rule="evenodd" d="M2 1v22h22zM6 12l7 7H6z"/>',
  wavesk: '<path d="M2 8q5-4 10 0t10-2M2 13q5-4 10 0t10-2M2 18q5-4 10 0t10-2" stroke="#333" stroke-width="4" fill="none"/><path d="M2 8q5-4 10 0t10-2M2 13q5-4 10 0t10-2M2 18q5-4 10 0t10-2" class="sw"/>',
  group: '<path fill="#333" class="st" d="M2 2h20v20H2z"/><path fill="#333" d="M3 3h18v18H3z"/><circle class="w" cx="9" cy="9" r="4.500"/><path class="w" d="M12 12h7v7h-7z"/>',
  xref: '<circle cx="12" cy="11" r="9" fill="#d5d5d5" stroke="#333"/><path class="t" stroke="#333" d="M10 5h4v7h4l-6 6-6-6h4z"/><path stroke="#333" stroke-width="2" d="M6 20h12"/>',
  bone: '<circle class="w" cx="4" cy="4" r="3.500"/><path class="w" d="M7 10l4-3 12 16z"/>',
  bonek: '<circle cx="4" cy="4" r="3" fill="#d5d5d5" stroke="#333"/><path d="M5 10l5-4 12 16z" fill="#d5d5d5" stroke="#333"/>',
  boxk: '<path d="M2 4h20v5H2zM4 9h16v12H4z" fill="#d5d5d5" stroke="#333"/><path d="M8 13h8" stroke="#333" stroke-width="2"/>',
  frozek: '<circle cx="12" cy="12" r="9" fill="#d5d5d5"/>' + flake('#333'),
  pagelines: page + '<path stroke="#444" stroke-width="2" d="M7 7h8M7 11h10M7 15h8"/>', pageblank: page, pageout: '<path class="sw" d="M4 3h16v18H4z"/><path class="sw" d="M8 7h7M8 11h5M8 15h6M8 7v9"/>',
  funnelgear: `<path class="d" d="M1 2h20l-8 9v11l-5-4v-7z"/>${gear(17, 17, 4, '#8c8c8c')}`, funnel: '<path class="w" d="M2 3h20l-8 9v10l-4-3v-7z"/>',
  container: '<path class="sw" d="M2 7h3V3h4v4h6V3h4v4h3v14H2z"/>',
  filter: '<path class="w" stroke="#333" d="M2 2h20l-7 9v10l-5-4v-6z"/><path class="st" d="M22 18h-9M16 14l-4 4 4 4"/>',
  lock: '<path class="w" d="M4 11h16v12H4z"/><path class="sw fat" d="M7 11V7q0-5 5-5t5 5v4"/><path class="sk" d="M12 15v5"/>',
  addlayer: '<path class="sw fat" d="M9 2v16M1 10h16"/>' + miniLayers, layerin: layers('#d5d5d5', '#45bfbd', '#d5d5d5') + '<path class="st" d="M19 0v8M15 5l4 4 4-4"/>',
  hierarchy: '<path class="w" d="M0 1h14v5H0z"/><path class="st" d="M6 7v14h8M6 13h8"/><path class="t" d="M16 10h6v5h-6zM16 18h6v5h-6z"/>',
  layers: layers('#45bfbd', '#d5d5d5', '#d5d5d5'), layersw: layers('#e0e0e0', '#e0e0e0', '#e0e0e0'), layerst: layers('#45bfbd', '#45bfbd', '#45bfbd'), layersd: layers('#2f2f2f', '#2f2f2f', '#2f2f2f'),
  eyelayer: '<path class="sw" d="M1 9Q10 0 20 9Q10 17 1 9z"/><circle class="w" cx="11" cy="8" r="3"/>' + miniLayers, frost: `<g transform="scale(.85)">${flake('#d5d5d5')}</g>` + miniLayers,
  hier2: '<path class="w" d="M3 2h18v6H3zM2 16h7v6H2zM15 16h7v6h-7z"/><path class="sw" d="M12 8v5M5 16v-3h14v3"/>',
  docsel: page + '<path stroke="#444" stroke-width="2" d="M7 7h8M7 11h8M7 15h5"/>' + cursor, docsel2: page + cursor,
  flake: flake('#333'), teapot: teapot('#e2e2e2'), teapotd: teapot('#333'),
  x: '<path d="M4 4l16 16M20 4L4 20" stroke="currentColor" stroke-width="1.600"/>',
  plus: '<path d="M12 2v20M2 12h20" stroke="#aaa" stroke-width="2.500"/>',
  modify: '<path class="st thin" d="M3 3h18v18H3z"/><path d="M7 19Q8 8 18 6" stroke="#ddd" stroke-width="3" fill="none"/><path class="t" d="M0 0h5v5H0zM19 0h5v5h-5zM0 19h5v5H0zM19 19h5v5h-5z"/>',
  hier: '<path d="M3 1h18v8H3z" fill="#999"/><path stroke="#3f9a98" stroke-width="2" d="M12 9v5M4 19v-5h16v5"/><path fill="#3f9a98" d="M1 18h6v5H1zM17 18h6v5h-6z"/>',
  motion: '<circle cx="15" cy="12" r="8.500" fill="#999"/><path d="M6 4q-5 8 0 16M2 5q-4 7 0 14" stroke="#5a8f8f" stroke-width="2" fill="none"/>',
  display: '<path d="M1 3h22v14H1zM8 19h8v3H8z" fill="#999"/>', util: '<path d="M4 1l4 4-3 3-4-3q-1 7 6 7l12 11q5-1 3-4L11 8q1-7-7-7z" fill="#999"/>',
  pin: '<path class="w" d="M14 2l8 8-3 1-4 5-3-1-9 8 7-10-2-3 6-4z"/>', tube: '<path class="t" d="M8 4h8v16q-4 5-8 0z"/><path class="sw" d="M5 2h14M8 4v16M16 4v16"/>',
  unique: '<circle class="w" cx="6" cy="6" r="5"/><circle class="t" cx="15" cy="18" r="5.500"/><path class="st" d="M13 6h7v6M17 9l3 4 3-4"/>', trash: '<path class="sw" d="M5 8h14v15H5zM3 5h18M9 5V2h6v3"/><path class="sw" d="M10 10v10M14 10v10"/>',
  configure: '<path class="sw" d="M2 3h18v19H2zM2 9h18M6 13h4v3H6zM13 13h4v3h-4zM6 19h4M13 19h4"/><path class="sy fat" d="M23 2l-9 10"/>',
  minicurve: '<path class="sw" stroke-dasharray="2 2" d="M3 1v22"/><path class="st" d="M8 14q4-14 8 0t8 0"/>',
  isolate: '<path class="sw" d="M2 7V2h5M17 2h5v5M22 17v5h-5M7 22H2v-5"/><path class="t" d="M7 7h10v10H7z"/>', absolute: '<path class="sw" d="M2 2h20v20H2zM12 2v20M2 12h20"/><circle cx="12" cy="12" r="5" fill="#444" class="sw"/>',
  zoom: '<circle class="sw" cx="14" cy="9" r="7"/><path class="sw fat" d="M9 14l-7 8"/>', zoomall: '<circle class="sw" cx="9" cy="14" r="5"/><path class="sw fat" d="M6 18l-4 5"/><path class="t" d="M10 1h6v6h-6zM17 1h6v6h-6zM17 9h6v6h-6z"/>',
  extents: '<path class="sw" d="M2 7V2h5M17 2h5v5M22 17v5h-5M7 22H2v-5"/><path class="t" d="M12 4l7 4v8l-7 4-7-4V8z"/>', extall: '<path class="t" d="M14 3l5-2 4 2v6l-4 3-5-3zM2 15h6v6H2zM14 15h6v6h-6z"/><path class="sw" d="M12 8l-4 5"/>',
  fov: '<path class="sw" d="M4 2l16 10L4 22"/><path class="sw" d="M10 5v12"/>', walk: '<circle class="w" cx="12" cy="3" r="2.500"/><path class="sw" d="M12 6v8l5 8M12 14l-4 9M6 12l6-5 5 5"/>',
  orbit: '<circle class="t" cx="9" cy="9" r="7"/><path class="sw" d="M14 3q9 3 3 13t-12 5M22 4L7 21"/>', maximize: '<path class="w" d="M2 1h20v22H2z"/><path class="k" d="M4 14h8v7H4z"/><path class="sk" d="M13 11l6-6M14 5h5v5"/>',
  refresh: '<path fill="#eef6ff" d="M3 1h18v22H3z"/><path stroke="#25a525" stroke-width="3.500" fill="none" d="M7 10q4-6 9-2M17 14q-4 6-9 2"/><path fill="#25a525" d="M13 10h6V4zM11 14H5v6z"/>',
  page: '<path fill="#fff" d="M4 1h16v22H4z"/><path stroke="#666" stroke-width="2" d="M7 6h10M7 10h10M7 14h10M7 18h10"/>', treeview: '<path fill="#e6e6e6" d="M1 2h22v20H1z"/><path stroke="#333" stroke-width="2" fill="none" d="M5 5v13h6M5 10h7M14 6h8M16 11h6M16 17h6"/><path fill="#7a8f3a" d="M3 3h5v5H3zM10 8h4v4h-4zM10 15h4v4h-4z"/>',
  table: '<path fill="#fff" d="M1 2h22v21H1z"/><path stroke="#5b87c2" stroke-width="1.500" d="M3 7h18M3 11h18M3 15h18M3 19h18M8 6v16M12 6v16M16 6v16"/>',
  help: '<circle cx="8" cy="14" r="7" fill="#2440b8"/><path class="w" d="M4 10l4-2 2 4-4 3z"/><path stroke="#ddd" stroke-width="3.500" fill="none" d="M11 6q2-6 8-3t-2 9v3M17 18v4"/>', helpcursor: '<path class="w" d="M2 3l10 9H7l2 7-3 1-2-7-2 2z"/><path stroke="#ddd" stroke-width="3.500" fill="none" d="M11 6q2-6 8-3t-2 9v3M17 18v4"/>',
  vault: '<path fill="#b5b5b5" d="M12 1l9 4v13l-9 5-8-5V5z"/><path fill="#e4e4e4" d="M12 9l9-4v13l-9 5z"/><path stroke="#666" d="M7 8v10M10 9v10" stroke-width="2"/>',
  max: '<path fill="#d9f0f0" d="M0 0h24v24H0z"/><text x="6" y="20" font-size="21" font-weight="700" font-family="Roboto" fill="#0e8c90">3</text>',
  maps: '<path fill="#1fd51f" stroke="#111" d="M6 3l16-1-3 8 2 9-9-1-10 4 5-10z"/>', file: '<path fill="#fff" d="M4 0h12l5 5v19H4z"/><path fill="#2f7fd6" d="M7 8h11v10H7z"/><path stroke="#fff" d="M9 16l6-6"/>',
};
const svg = (n) => `<svg viewBox="0 0 24 24" fill="none">${icons[n]}</svg>`;

document.querySelectorAll('[data-icon]').forEach((e) => { e.innerHTML = svg(e.dataset.icon); });
document.querySelectorAll('[data-tools]').forEach((e) => {
  e.innerHTML = e.dataset.tools.split(' ').map((t) => {
    if (t === '|') return '<i class="sep"></i>';
    const name = t.replace(/[*^]/, '');
    const cls = t.endsWith('*') ? ' on' : t.endsWith('^') ? ' more' : '';
    return `<button class="tool${cls}" aria-label="${name}">${svg(name)}</button>`;
  }).join('');
});
const fill = (id, html) => { document.getElementById(id).innerHTML = html; };
const spans = (list, on) => list.split(' ').map((n) => `<span${n === on ? ' class="on"' : ''}>${svg(n)}</span>`).join('');
fill('cmdtabs', spans('plus modify hier motion display util', 'modify'));
fill('exon', spans('ballk shapesk lightk camk rulerk wavesk group xref bonek boxk frozek eyek'));
fill('exoff', spans('pagelines pageblank pageout funnelgear funnel container'));
fill('nav', spans('zoom zoomall extents extall fov walk orbit maximize'));

const quad = '<svg viewBox="0 0 32 32" fill="#666" stroke="#2e2e2e" stroke-width="2"><path d="M2 2h13v13H2zM17 2h13v13H17zM2 17h13v13H2zM17 17h13v13H17z"/></svg>';
const one = '<svg viewBox="0 0 32 32" fill="#66717f" stroke="#2e3846" stroke-width="2"><path d="M2 2h28v28H2z"/></svg>';
fill('layouts', Array.from({ length: 7 }, (_, i) => `<button aria-label="Layout ${i + 1}">${i < 6 ? quad : one}</button>`).join(''));

const rings = [[308, 212, 40], [320, 270, 40], [332, 328, 41], [342, 388, 41], [355, 454, 42], [368, 520, 43], [382, 583, 44], [397, 658, 45], [413, 733, 46]];
fill('rings', rings.map(([x, y, r], i) => {
  const c = `rgb(${160 + i * 6},${238 - i * 10},${220 + i * 2})`;
  return `<path fill="#1d1d1d" fill-opacity=".8" stroke="${c}" d="M${x - r * 0.6} ${y + r * 0.75}A${r} ${r} 0 1 1 ${x + r * 0.6} ${y + r * 0.75}"/><path stroke="#ddd" stroke-dasharray="8 17" d="M${x - 6} ${y - 26}l4 60M${x + 14} ${y - 20}l5 54"/>`;
}).join(''));

const last = 225;
const labelled = [80, 90, 100, 110, 120, 130, 140, 210, 220];
const at = (f) => `${(0.2 + f * 99.6 / last).toFixed(3)}%`;
let marks = '<rect x="0" width="7" height="27" fill="#8a8420"/><text x="1" y="23" fill="#eee850">0</text>';
for (let f = 1; f <= last; f += 1) marks += `<line x1="${at(f)}" x2="${at(f)}" y1="0" y2="12" stroke="#666"/>`;
labelled.forEach((f) => { marks += `<text x="${at(f)}" y="24" fill="#aaa" text-anchor="middle">${f}</text>`; });
fill('track', marks);

const main = 'Adjustable_Car_Exhaust_Suction_Hose_Yellow_Rigged';
const mm = 'Main_management_facility';
const tree = [['g', '0 (default)', 1], ['g', main, 1],
  ...['Exhaust_Extractor', 'Exhaust_hose', 'Extractor_1', 'Extractor_002', 'Extractor_Connector', 'Holder', 'Tip', 'Tip_1', 'Tip_2', 'tubes'].map((n) => ['ball', n, 1]),
  ['group', 'Vehicle_Exhaust_Extractor', 1], ['g', `${main}_bones`, 1], ['ruler', `${mm}_001`, 0],
  ...['Hub003', 'Hub004', 'Spine1', 'Spine2', 'Spine3', 'Spine4', 'Spine5', 'Spine6', 'Spine7', 'Spine8', 'Spine9', 'Spine10'].map((n) => ['bone', mm + n, 0]),
  ['g', `${main}_controllers`, 1], ['shapes', 'CATRigHub004Gizmo', 1],
  ...['001', '002', '4Gizmo', '5Gizmo', '6Gizmo', '7Gizmo', '8Gizmo', '9Gizmo', '10Gizmo'].map((n) => ['shapes', `CATRigSpine${n}`, 0]), ['shapes', mm, 0]];
fill('layers', tree.map(([k, n, r], i) => {
  const top = k === 'g';
  const lead = top && i ? '<svg viewBox="0 0 12 12"><path d="M0 2h12L6 9z" fill="#fff"/></svg>' : '';
  const ic = top ? (i ? 'layersd' : 'layerst') : k;
  const cls = i === 1 ? 'current' : n === 'tubes' ? 'selected' : '';
  return `<tr class="${cls}"><td><div class="row${top ? '' : ' child'}"><span class="lead">${lead}</span><span class="ic">${svg('eye')}</span><span class="ic">${svg(ic)}</span><span class="nm">${n}</span></div></td><td>${svg('flake')}</td><td>${svg(r ? 'teapot' : 'teapotd')}</td><td></td></tr>`;
}).join(''));

const V = 'Vehicle_Exhaust_Extractor_';
const sq = (c, extra = '') => `<svg viewBox="0 0 16 16"><path fill="${c}" d="M0 0h16v16H0z"/>${extra}</svg>`;
const thumb = {
  dark: sq('#777', '<circle cx="8" cy="8" r="7" fill="#1e1e1e"/><path fill="#777" d="M5 4h3v3H5z"/>'), chrome: sq('#999', '<circle cx="8" cy="8" r="6" fill="#ccc"/><path fill="#454" d="M5 6h7v3H5z"/>'),
  lav: sq('#b7b7ff'), black: sq('#000'), grey: sq('#999'), light: sq('#bdbdbd'), pale: sq('#b5b5b5', '<path fill="#888" d="M0 4h16v2H0z"/>'),
  noise: sq('#222', '<path fill="#999" d="M1 1h3v2H1zM7 3h2v4H7zM11 1h4v3h-4zM2 8h3v5H2zM9 10h3v4H9zM13 8h2v3h-2z"/>'), mono: sq('#000', '<path fill="#fff" d="M2 1h4v3H2zM8 5h3v5H8zM12 2h3v4h-3zM1 9h4v4H1zM11 11h4v3h-4z"/>'),
  rough: sq('#8f8f8f', '<path fill="#bbb" d="M2 2h3v3H2zM9 4h4v2H9zM4 10h3v3H4zM11 11h3v2h-3z"/>'), base: sq('#a0a0a0', '<path fill="#222" d="M1 2h2v2H1zM6 3h2v5H6zM3 7h3v2H3zM10 5h2v2h-2z"/>'), metal: sq('#f0f0f0', '<path fill="#222" d="M1 2h2v2H1zM6 3h2v5H6zM3 7h3v2H3zM10 5h2v2h-2zM12 12h4v4h-4z"/>'),
  pink: sq('#b7b0ff', '<path fill="#d070d8" d="M1 4h2v2H1zM5 8h2v2H5zM2 11h3v2H2zM9 6h2v2H9zM10 12h2v2h-2z"/>'), spot: sq('#080808', '<path fill="#ddd" d="M9 0h3v3H8z"/>'),
};
const mats = [[0, 'dark', 'Exhaust_Extractor_MAT&nbsp; ( VRayMtl )', 'flag'], [1, 'lav', 'Bump: Map #36&nbsp; ( VRayNormalMap )'], [2, 'lav', `Normal map: Map__39 (${V}Base_Normal.png)`],
  [1, 'noise', `Diffuse: Map__35 (${V}Base_BaseColor.png)`], [1, 'mono', `Metalness: Map__40 (${V}Base_Metallic.png)`], [1, 'rough', `Reflection roughness: Map__37 (${V}Base_Roughness.png)`], [1, 'black', `Refraction: Map__38 (${V}Base_Refraction.png)`, 'end'],
  [0, 'chrome', 'extractor_MAT&nbsp; ( VRayMtl )', 'flag hot'], [2, 'lav', 'Normal: Bitmaptexture (extractor_normal.png)', 'hot'], [1, 'base', 'Diffuse: Bitmaptexture (extractor_basecolor.png)', 'hot'], [1, 'metal', 'Metalness: Bitmaptexture (extractor_metallic.png)', 'hot'], [1, 'grey', 'Reflection roughness: Bitmaptexture (extractor_roughness.png)', 'hot end'],
  [0, 'light', `Map__42 (${V}Tube_Displacement.png)`], [0, 'dark', 'Pipe_MAT&nbsp; ( VRayMtl )', 'flag'], [1, 'pink', 'Bump: Map #19&nbsp; ( VRayNormalMap )'], [2, 'pink', `Normal map: Map__15 (${V}Tube_Normal.png)`],
  [1, 'spot', `Diffuse: Map__14 (${V}Tube_BaseColor.png)`], [1, 'black', `Metalness: Map__16 (${V}Tube_Metallic.png)`], [1, 'pale', `Reflection roughness: Map__18 (${V}Tube_Roughness.png)`, 'end']];
fill('mats', mats.map(([d, t, n, f = '']) => {
  const end = f.includes('end') ? ' end' : '';
  const pads = d === 2 ? `<span class="pad gap"></span><span class="pad${f ? ' blank' : ' end'}"></span>` : d ? `<span class="pad${end}"></span>` : '';
  return `<li class="${f.includes('hot') ? 'hot' : ''}">${pads}<span class="m">${thumb[t]}<span>${n}</span>${f.includes('flag') ? '<i class="flag"></i>' : ''}</span></li>`;
}).join(''));

const assets = [['vault', 'Autodesk Vault', 'Logged Out', 0], ['max', `${main}_max_vray.max`, 'Ok', 1], ['maps', 'Maps / Shaders', '', 2],
  ...['basecolor', 'metallic', 'normal', 'roughness'].map((n) => ['file', `extractor_${n}.png`, 'Found', 3]),
  ...['Base_BaseColor', 'Base_Metallic', 'Base_Normal', 'Base_Refraction', 'Base_Roughness', 'Tube_BaseColor', 'Tube_Displacement', 'Tube_Metallic', 'Tube_Normal', 'Tube_Roughness'].map((n) => ['file', `${V}${n}.png`, 'Found', 3])];
fill('assets', assets.map(([k, n, s, l]) => `<tr><td><div class="at-row l${l}">${svg(k)}${n}</div></td><td>${s}</td></tr>`).join('') + '<tr><td></td><td></td></tr>');
```
